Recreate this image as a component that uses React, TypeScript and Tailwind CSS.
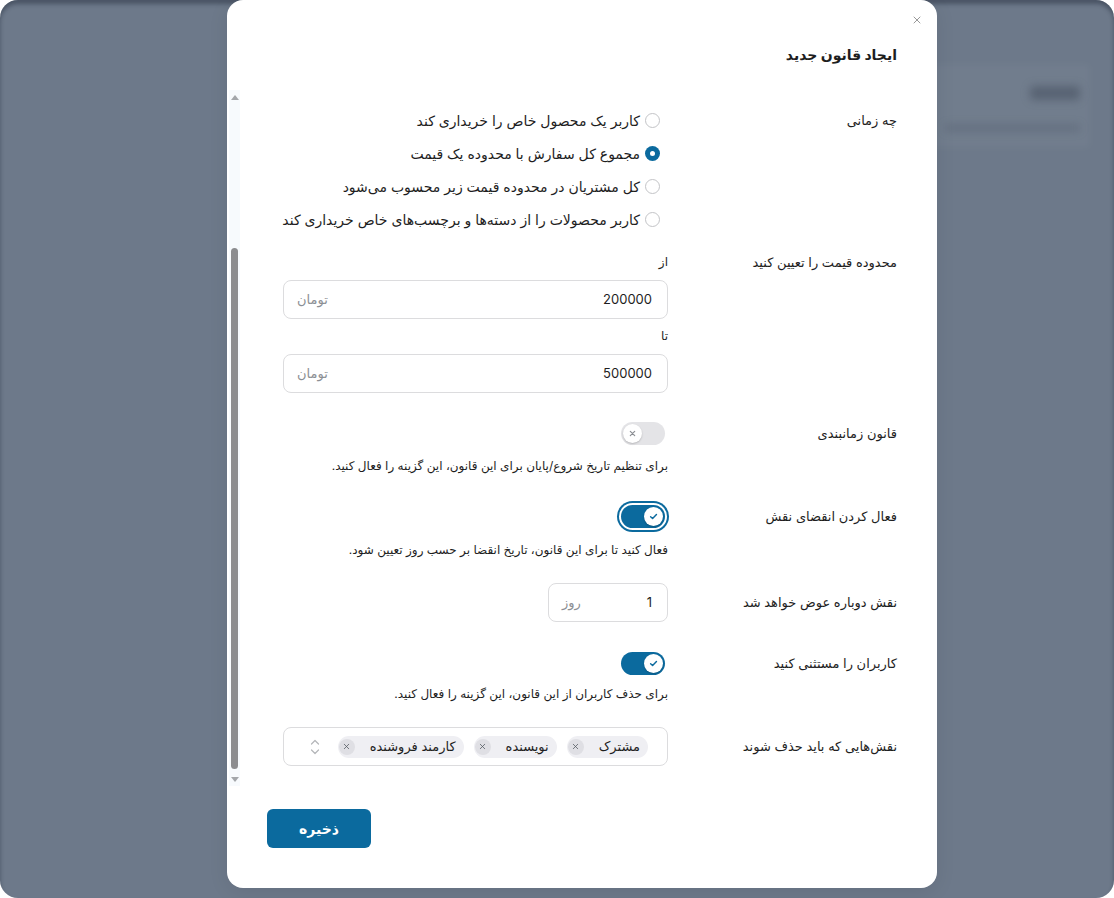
import { X } from 'lucide-react'

const font = "font-['Inter','DejaVu_Sans',sans-serif]"

function Radio({ checked, label }: { checked?: boolean; label: string }) {
  return (
    <div className="flex h-[33px] items-center gap-[5px] whitespace-nowrap pr-[8px]">
      {checked ? (
        <span className="flex h-[15px] w-[15px] shrink-0 items-center justify-center rounded-full bg-[#0b6a9e]">
          <span className="h-[5px] w-[5px] rounded-full bg-white" />
        </span>
      ) : (
        <span className="h-[15px] w-[15px] shrink-0 rounded-full border border-[#c3c4c7] bg-white" />
      )}
      <span className="text-[14px] text-[#1e1e1e]">{label}</span>
    </div>
  )
}

function Toggle({ on, focused }: { on?: boolean; focused?: boolean }) {
  return (
    <div className="flex h-[32px] items-center pr-[3px]">
      <div
        className={
          on
            ? focused
              ? 'flex h-[23px] w-[44px] items-center justify-start rounded-full bg-[#0b6a9e] px-[2px] ring-2 ring-[#0b6a9e] ring-offset-2'
              : 'flex h-[23px] w-[44px] items-center justify-start rounded-full bg-[#0b6a9e] px-[2px]'
            : 'flex h-[23px] w-[44px] items-center justify-end rounded-full bg-[#e4e4e7] px-[2px]'
        }
      >
        <span className="flex h-[19px] w-[19px] items-center justify-center rounded-full bg-white shadow-[0_1px_2px_rgba(0,0,0,0.2)]">
          {on ? (
            <svg width="9" height="9" viewBox="0 0 10 10" fill="none">
              <path d="M1.8 5.2 4 7.3 8.3 2.8" stroke="#0b6a9e" strokeWidth="1.6" strokeLinecap="round" strokeLinejoin="round" />
            </svg>
          ) : (
            <svg width="7" height="7" viewBox="0 0 8 8" fill="none">
              <path d="M1.5 1.5 6.5 6.5M6.5 1.5 1.5 6.5" stroke="#8c8f94" strokeWidth="1.4" strokeLinecap="round" />
            </svg>
          )}
        </span>
      </div>
    </div>
  )
}

function Field({ value, unit, className }: { value: string; unit: string; className: string }) {
  return (
    <div className={`flex items-center justify-between rounded-[8px] border border-[#dcdcde] bg-white pl-[13px] pr-[15px] ${className}`}>
      <span className="text-[13px] text-[#1e1e1e]">{value}</span>
      <span className="text-[13px] text-[#8c8f94]">{unit}</span>
    </div>
  )
}

function Chip({ label }: { label: string }) {
  return (
    <span className="flex h-[22px] items-center gap-[15px] rounded-full bg-[#efeff3] pl-[1px] pr-[8px]">
      <span className="text-[13px] text-[#1e1e1e]">{label}</span>
      <span className="flex h-[16px] w-[16px] items-center justify-center rounded-full bg-[#dfdfe4]">
        <X size={9} strokeWidth={2} className="text-[#50575e]" />
      </span>
    </span>
  )
}

function Row({ label, className, labelClass, children }: { label: string; className: string; labelClass: string; children: React.ReactNode }) {
  return (
    <div className={`flex items-start gap-[29px] ${className}`}>
      <div className={`w-[200px] shrink-0 text-[13px] text-[#1e1e1e] ${labelClass}`}>{label}</div>
      <div className="flex w-[385px] flex-col items-start">{children}</div>
    </div>
  )
}

function Hint({ text, className }: { text: string; className: string }) {
  return <p className={`text-[12px] leading-[16px] text-[#1e1e1e] ${className}`}>{text}</p>
}

function ScrollBar() {
  return (
    <div className="flex w-[11px] shrink-0 flex-col bg-[#f7fafd]">
      <div className="flex h-[14px] items-center justify-center">
        <svg width="8" height="5" viewBox="0 0 8 5"><path d="M4 0 8 5H0z" fill="#a3a6aa" /></svg>
      </div>
      <div className="flex flex-1 flex-col px-[2px] pb-[3px] pt-[144px]">
        <div className="flex-1 rounded-full bg-[#8b8c8f]" />
      </div>
      <div className="flex h-[14px] items-center justify-center">
        <svg width="8" height="5" viewBox="0 0 8 5"><path d="M0 0h8L4 5z" fill="#a3a6aa" /></svg>
      </div>
    </div>
  )
}

function Backdrop() {
  return (
    <div className="absolute inset-0 rounded-[18px] bg-[#6d798a] shadow-[inset_0_4px_4px_rgba(30,40,55,0.45)]">
      <div className="absolute left-[930px] top-[64px] h-[84px] w-[160px] rounded-[4px] bg-white/[0.03] blur-[3px]" />
      <div className="absolute left-[1030px] top-[86px] h-[14px] w-[50px] rounded bg-[#3f4a5a]/50 blur-[4px]" />
      <div className="absolute left-[945px] top-[125px] h-[6px] w-[135px] rounded bg-[#4a5566]/40 blur-[4px]" />
    </div>
  )
}

export default function App() {
  return (
    <div className={`relative h-[898px] w-full overflow-hidden bg-white ${font}`}>
      <Backdrop />
      <div dir="rtl" className="absolute left-[227px] top-0 flex h-[888px] w-[710px] flex-col rounded-[16px] bg-white shadow-[0_4px_20px_rgba(0,0,0,0.08)]">
        <button className="absolute right-[14px] top-[14px] text-[#757575]">
          <X size={12} strokeWidth={1.5} />
        </button>

        {/* Header */}
        <h1 className="pr-[40px] pt-[43px] text-[14px] font-bold leading-[24px] text-[#1e1e1e]">ایجاد قانون جدید</h1>

        {/* Body */}
        <div className="mt-[23px] flex h-[696px] pl-[2px]">
          <div className="flex-1 pr-[40px] pt-[14px]">
            <Row label="چه زمانی" labelClass="leading-[33px]" className="">
              <Radio label="کاربر یک محصول خاص را خریداری کند" />
              <Radio checked label="مجموع کل سفارش با محدوده یک قیمت" />
              <Radio label="کل مشتریان در محدوده قیمت زیر محسوب می‌شود" />
              <Radio label="کاربر محصولات را از دسته‌ها و برچسب‌های خاص خریداری کند" />
            </Row>

            <Row label="محدوده قیمت را تعیین کنید" labelClass="leading-[20px]" className="mt-[16px]">
              <span className="text-[12px] leading-[20px] text-[#1e1e1e]">از</span>
              <Field value="200000" unit="تومان" className="mt-[8px] h-[39px] w-full" />
              <span className="mt-[7px] text-[12px] leading-[20px] text-[#1e1e1e]">تا</span>
              <Field value="500000" unit="تومان" className="mt-[8px] h-[39px] w-full" />
            </Row>

            <Row label="قانون زمانبندی" labelClass="leading-[32px]" className="mt-[24px]">
              <Toggle />
              <Hint className="mt-[9px]" text="برای تنظیم تاریخ شروع/پایان برای این قانون، این گزینه را فعال کنید." />
            </Row>

            <Row label="فعال کردن انقضای نقش" labelClass="leading-[32px]" className="mt-[26px]">
              <Toggle on focused />
              <Hint className="mt-[10px]" text="فعال کنید تا برای این قانون، تاریخ انقضا بر حسب روز تعیین شود." />
            </Row>

            <Row label="نقش دوباره عوض خواهد شد" labelClass="leading-[39px]" className="mt-[25px]">
              <Field value="1" unit="روز" className="h-[39px] w-[120px]" />
            </Row>

            <Row label="کاربران را مستثنی کنید" labelClass="leading-[32px]" className="mt-[25px]">
              <Toggle on />
              <Hint className="mt-[7px]" text="برای حذف کاربران از این قانون، این گزینه را فعال کنید." />
            </Row>

            <Row label="نقش‌هایی که باید حذف شوند" labelClass="leading-[39px]" className="mt-[25px]">
              <div className="flex h-[39px] w-full items-center gap-[10px] rounded-[8px] border border-[#dcdcde] pl-[25px] pr-[19px]">
                <Chip label="مشترک" />
                <Chip label="نویسنده" />
                <Chip label="کارمند فروشنده" />
                <svg className="ms-auto" width="12" height="22" viewBox="0 0 12 22" fill="none">
                  <path d="M2.5 8 6 4.5 9.5 8M2.5 14 6 17.5 9.5 14" stroke="#b4b6b9" strokeWidth="1.2" strokeLinecap="round" strokeLinejoin="round" />
                </svg>
              </div>
            </Row>
          </div>
          <ScrollBar />
        </div>

        {/* Footer */}
        <div className="mt-[23px] flex justify-end pl-[40px]">
          <button className="h-[39px] w-[104px] rounded-[6px] bg-[#0b6a9e] text-[14px] font-bold text-white">ذخیره</button>
        </div>
      </div>
    </div>
  )
}
